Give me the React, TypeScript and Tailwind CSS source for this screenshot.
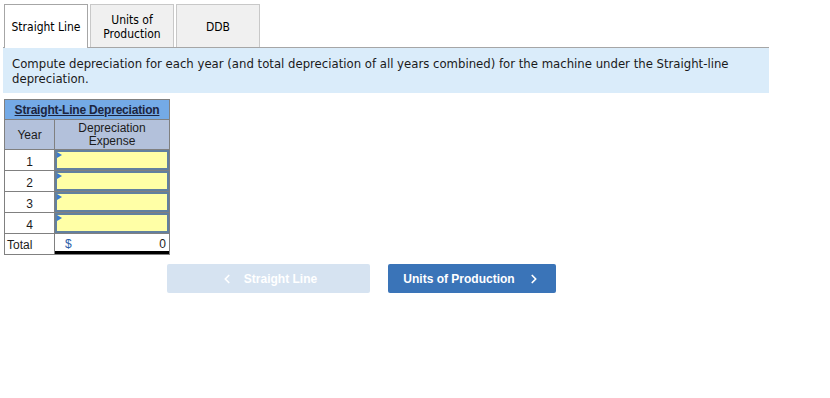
import { ChevronLeft, ChevronRight } from "lucide-react";

const TABS = [
	{ id: "sl", label: ["Straight Line"], active: true },
	{ id: "uop", label: ["Units of", "Production"], active: false },
	{ id: "ddb", label: ["DDB"], active: false },
];

const YEARS = [1, 2, 3, 4];

function Tabs() {
	return (
		<div className="flex items-end gap-[2px] pl-[1px] border-b border-[#a6a6a6] w-[766px] h-[44px]">
			{TABS.map(({ id, label, active }) => (
				<div
					key={id}
					className={
						active
							? "w-[84px] h-[44px] -mb-px flex flex-col items-center justify-center border border-b-0 border-[#a6a6a6] bg-white text-[12px] leading-[14px] text-black"
							: "w-[84px] h-[43px] flex flex-col items-center justify-center border border-b-0 border-[#c8c8c8] bg-[#f0f0f0] text-[12px] leading-[14px] text-black pt-[1px]"
					}
				>
					{label.map((line) => (
						<span key={line}>{line}</span>
					))}
				</div>
			))}
		</div>
	);
}

function InputCell() {
	return (
		<div className="relative h-full bg-[#ffffa6] border-2 border-[#62809f]">
			<span className="absolute left-0 top-0 w-0 h-0 border-t-[3px] border-b-[3px] border-l-[5px] border-t-transparent border-b-transparent border-l-[#3a7bd0]" />
		</div>
	);
}

function DepreciationTable() {
	return (
		<div className="w-[166px] font-['Liberation_Sans',Arial,sans-serif] text-[12px] text-[#1b1b1b] border border-[#808080]">
			<div className="h-[20px] bg-[#74aae6] flex items-center justify-center font-bold underline text-[#1c2540] border-b border-[#808080] tracking-[-0.2px]">
				Straight-Line Depreciation
			</div>
			<div className="flex h-[30px] bg-[#b3c1db] border-b border-[#808080]">
				<div className="w-[50px] flex items-center justify-center border-r border-[#808080]">Year</div>
				<div className="flex-1 flex flex-col items-center justify-center leading-[13px] pt-[1px]">
					<span>Depreciation</span>
					<span>Expense</span>
				</div>
			</div>
			{YEARS.map((year) => (
				<div key={year} className="flex h-[21px] border-b border-[#808080]">
					<div className="w-[50px] flex items-center justify-center border-r border-[#808080] pt-[3px]">{year}</div>
					<div className="flex-1">
						<InputCell />
					</div>
				</div>
			))}
			<div className="flex h-[20px]">
				<div className="w-[50px] flex items-center pl-[2px] border-r border-[#808080] pt-[2px]">Total</div>
				<div className="flex-1 flex items-center justify-between pl-[10px] pr-[3px] pt-[2px] border-b-[3px] border-black text-[#2a5ea8]">
					<span>$</span>
					<span className="text-[#1b1b1b]">0</span>
				</div>
			</div>
		</div>
	);
}

export default function App() {
	return (
		<div className="w-[830px] h-[398px] bg-white pl-[3px] pt-[4px] font-['DejaVu_Sans_Condensed','DejaVu_Sans',sans-serif]">
			<Tabs />
			<div className="w-[766px] bg-[#daecfa] pl-[9px] pr-[30px] pt-[8px] pb-[7px] text-[13px] leading-[15px] text-[#1a1a1a]">
				Compute depreciation for each year (and total depreciation of all years combined) for the machine under the Straight-line depreciation.
			</div>
			<div className="pl-[1px] mt-[6px]">
				<DepreciationTable />
			</div>
			<div className="flex gap-[18px] mt-[9px] pl-[164px] font-['Liberation_Sans',Arial,sans-serif] text-[12px] font-bold">
				<button className="w-[203px] h-[29px] rounded-[2px] bg-[#d6e3f1] text-white flex items-center justify-center gap-[10px]">
					<ChevronLeft size={14} strokeWidth={3} />
					<span>Straight Line</span>
				</button>
				<button className="w-[168px] h-[29px] rounded-[2px] bg-[#3a74b8] text-white flex items-center justify-center gap-[12px]">
					<span>Units of Production</span>
					<ChevronRight size={14} strokeWidth={3} />
				</button>
			</div>
		</div>
	);
}
